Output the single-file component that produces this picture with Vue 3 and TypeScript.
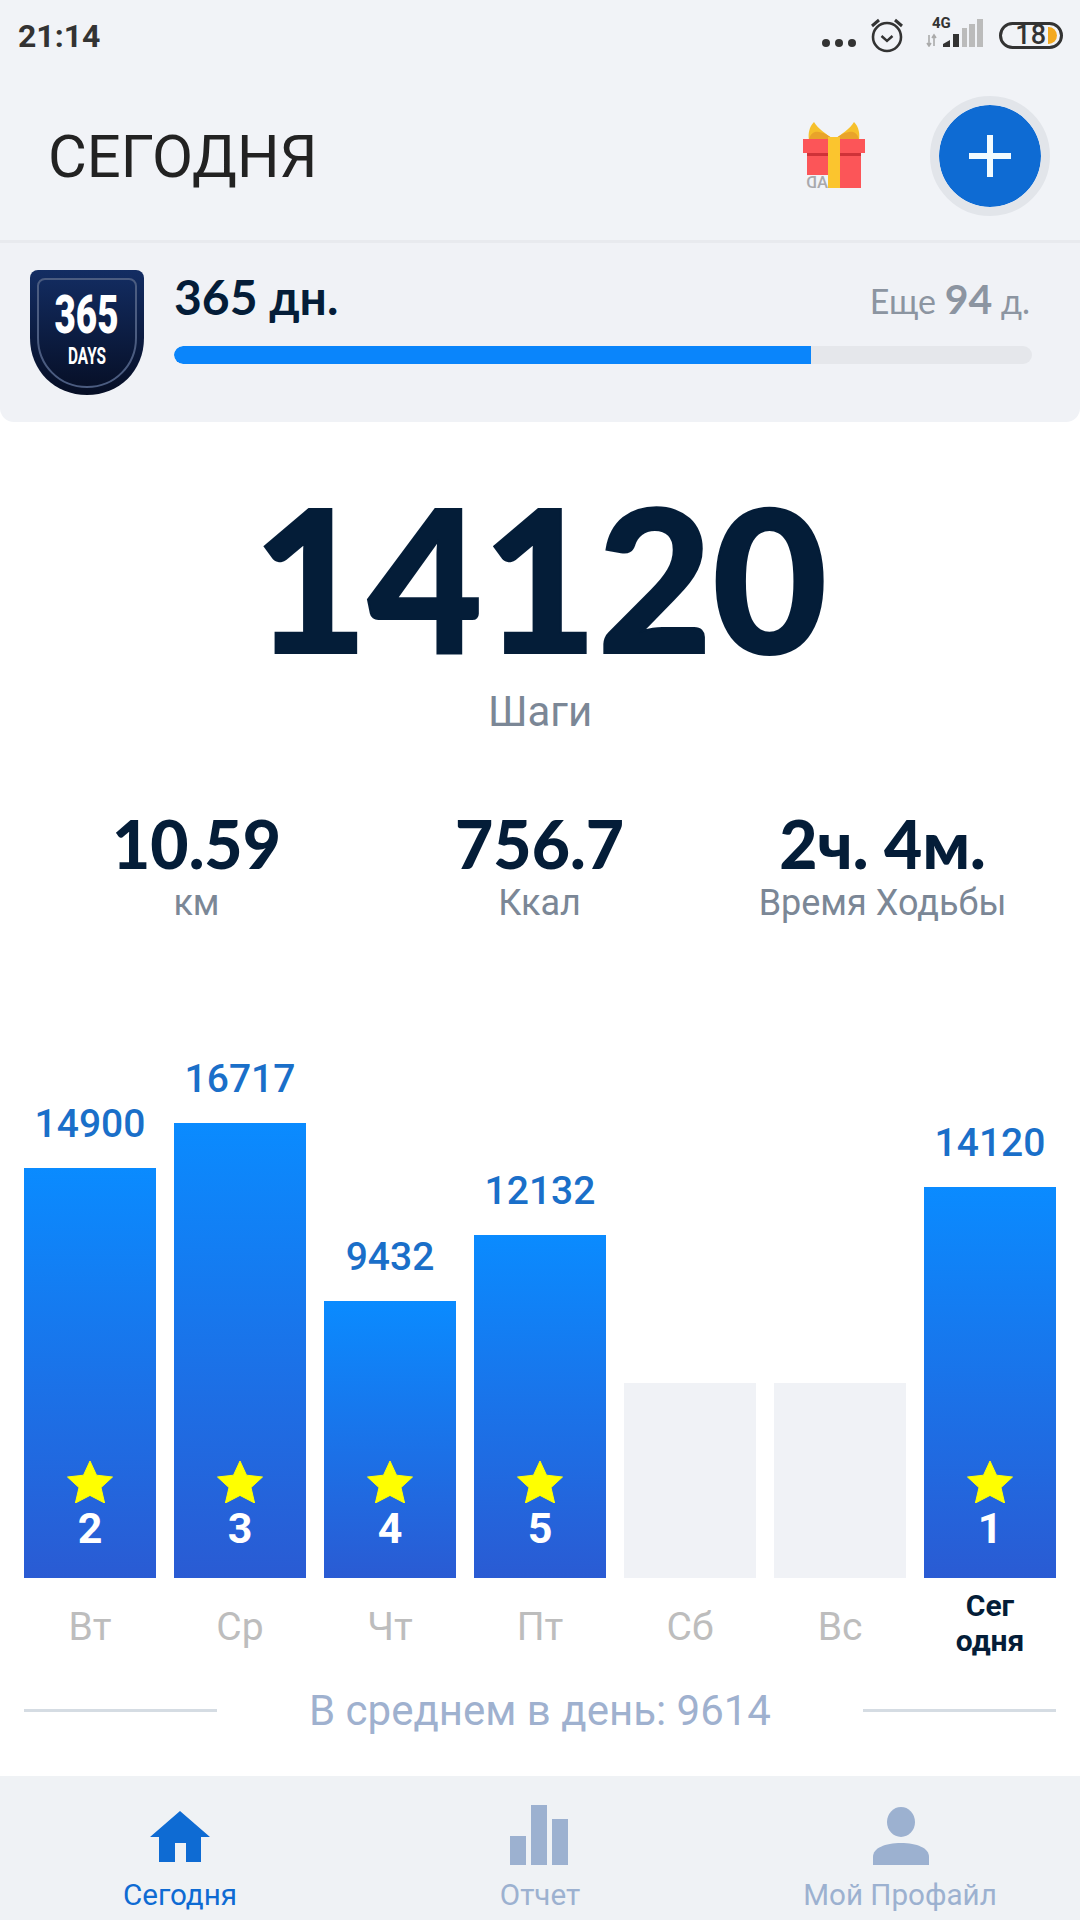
<script setup lang="ts">
interface Day { label: string; value?: number; height: number; rank?: number; today?: boolean }
const days: Day[] = [
  { label: 'Вт', value: 14900, height: 410, rank: 2 },
  { label: 'Ср', value: 16717, height: 455, rank: 3 },
  { label: 'Чт', value: 9432, height: 277, rank: 4 },
  { label: 'Пт', value: 12132, height: 343, rank: 5 },
  { label: 'Сб', height: 195 },
  { label: 'Вс', height: 195 },
  { label: 'Сег одня', value: 14120, height: 391, rank: 1, today: true },
]
const stats = [
  { value: '10.59', label: 'км' },
  { value: '756.7', label: 'Ккал' },
  { value: '2ч. 4м.', label: 'Время Ходьбы' },
]
</script>

<template>
  <div class="app">
    <div class="top">
      <div class="status">
        <span class="time">21:14</span>
        <div class="status-icons">
          <svg class="dots" width="36" height="10" viewBox="0 0 36 10"><circle cx="5" cy="5" r="4" /><circle cx="18" cy="5" r="4" /><circle cx="31" cy="5" r="4" /></svg>
          <svg class="alarm" width="36" height="36" viewBox="0 0 36 36" fill="none" stroke="#333" stroke-width="2.6">
            <circle cx="18" cy="20" r="14" />
            <path d="M12.5 19l5.5 5 5.500-5" stroke-width="2.4" />
            <path d="M3 9l7-6M33 9l-7-6" stroke-width="3" />
          </svg>
          <div class="net">
            <svg width="58" height="30" viewBox="0 0 58 30">
              <text x="7" y="11" class="net-text">4G</text>
              <path d="M4 18v11M2 26l2 3 2-3M9 29V18M7 21l2-3 2 3" stroke="#aaa" stroke-width="1.6" fill="none" />
              <path d="M18 30v-3l7-4v7zM28 30V17h6v13z" fill="#333" />
              <path d="M37 30V11h5v19zM44 30V7h6v23zM52 30V2h6v28z" fill="#bbb" />
            </svg>
          </div>
          <div class="battery">
            <span class="battery-num">18</span>
            <span class="battery-level"></span>
          </div>
        </div>
      </div>
      <header class="header">
        <h1 class="title">СЕГОДНЯ</h1>
        <div class="actions">
          <svg class="gift" width="62" height="66" viewBox="0 0 62 66">
            <path d="M31 18C24 12 15 7 11 0 6 5 5 12 6 18z" fill="#f6c02c" />
            <path d="M31 18C38 12 47 7 51 0c5 5 6 12 5 18z" fill="#f6c02c" />
            <path d="M6 18c1-7 6-9 10-8 6 1 11 4 15 8 4-4 9-7 15-8 4-1 9 1 10 8z" fill="#e9a32a" />
            <rect x="0" y="17" width="62" height="14" fill="#fc5558" />
            <rect x="4" y="31" width="54" height="35" fill="#fc5558" />
            <rect x="4" y="31" width="54" height="3" fill="#cf3238" />
            <rect x="25" y="15" width="12" height="51" fill="#fbc52e" />
            <rect x="3" y="53" width="22" height="13" fill="#f1f3f7" />
            <text transform="translate(25 65.500) scale(-1 1)" class="ad">AD</text>
          </svg>
          <button class="add" type="button" aria-label="Добавить">
            <svg width="42" height="42" viewBox="0 0 42 42"><path d="M21 0v42M0 21h42" stroke="#f2fbff" stroke-width="6" /></svg>
          </button>
        </div>
      </header>
    </div>

    <section class="goal">
      <svg class="shield" width="114" height="125" viewBox="0 0 114 125">
        <defs>
          <linearGradient id="sg" x1="0" y1="0" x2="0" y2="1"><stop offset="0" stop-color="#132d63" /><stop offset="1" stop-color="#060e24" /></linearGradient>
        </defs>
        <path d="M8 0h98a8 8 0 0 1 8 8v60c0 33-25 57-57 57S0 101 0 68V8a8 8 0 0 1 8-8z" fill="url(#sg)" />
        <path d="M15 9h84a7 7 0 0 1 7 7v52c0 27-21 49-49 49S8 95 8 68V16a7 7 0 0 1 7-7z" fill="none" stroke="#4b5c80" stroke-width="2" />
        <text x="56.500" y="63" class="sh-num" text-anchor="middle" textLength="64" lengthAdjust="spacingAndGlyphs">365</text>
        <text x="57" y="94" class="sh-days" text-anchor="middle" textLength="38" lengthAdjust="spacingAndGlyphs">DAYS</text>
      </svg>
      <div class="goal-body">
        <div class="goal-row">
          <span class="goal-name">365 дн.</span>
          <span class="goal-left">Еще <b>94</b> д.</span>
        </div>
        <div class="track"><div class="fill"></div></div>
      </div>
    </section>

    <section class="hero">
      <div class="steps">14120</div>
      <div class="steps-label">Шаги</div>
    </section>

    <section class="stats">
      <div v-for="s in stats" :key="s.label" class="stat">
        <div class="stat-value">{{ s.value }}</div>
        <div class="stat-label">{{ s.label }}</div>
      </div>
    </section>

    <section class="chart">
      <div v-for="d in days" :key="d.label" class="col">
        <div class="plot">
          <div v-if="d.value" class="bar-value">{{ d.value }}</div>
          <div class="bar" :class="{ empty: !d.value }" :style="{ height: d.height + 'px' }">
            <template v-if="d.rank">
              <svg class="star" width="46" height="42" viewBox="0 0 46 42"><path d="M23 0l6.500 14.200L45.500 16 34 26.600 37.600 42 23 34.400 8.400 42 12 26.600 .5 16l16-1.800z" fill="#ffff00" stroke="#ffff00" stroke-linejoin="round" /></svg>
              <span class="rank">{{ d.rank }}</span>
            </template>
          </div>
        </div>
        <div class="day" :class="{ today: d.today }">{{ d.label }}</div>
      </div>
    </section>

    <section class="average">
      <span class="rule"></span>
      <span class="avg-text">В среднем в день: 9614</span>
      <span class="rule"></span>
    </section>

    <nav class="nav">
      <div class="tab active">
        <svg width="60" height="60" viewBox="0 0 60 60"><path d="M30 6L60 32H51V57H36V38H25V57H9V32H0z" fill="#0e6bd3" /></svg>
        <span>Сегодня</span>
      </div>
      <div class="tab">
        <svg width="60" height="60" viewBox="0 0 60 60"><path d="M0 31h16v29H0zM21 0h16v60H21zM42 14h16v46H42z" fill="#9cb1d0" /></svg>
        <span>Отчет</span>
      </div>
      <div class="tab">
        <svg width="60" height="60" viewBox="0 0 60 60"><ellipse cx="31" cy="17" rx="14" ry="15" fill="#9cb1d0" /><path d="M3 60V52C3 43 15 38 31 38S59 43 59 52v8z" fill="#9cb1d0" /></svg>
        <span>Мой Профайл</span>
      </div>
    </nav>
  </div>
</template>

<style>
html, body { margin: 0; background: #fff; }
</style>

<style scoped>
.app { width: 1080px; height: 1920px; overflow: hidden; display: flex; flex-direction: column; background: #fff; font-family: Roboto, "Noto Sans", sans-serif; }
.top { background: #f1f3f7; border-bottom: 3px solid #e8eaee; }
.status { height: 72px; display: flex; align-items: center; justify-content: space-between; padding: 0 17px 0 18px; }
.time { font-size: 32px; font-weight: 700; color: #333; }
.status-icons { display: flex; align-items: center; }
.dots { fill: #333; margin-top: 14px; margin-right: 12px; }
.alarm { margin-top: -2px; margin-right: 20px; }
.net { margin-right: 16px; margin-top: -4px; }
.net-text { font: 700 15px Roboto, sans-serif; fill: #333; }
.battery { width: 64px; height: 27px; box-sizing: border-box; border: 3px solid #333; border-radius: 14px; display: flex; align-items: center; justify-content: flex-end; padding-right: 3px; margin-top: -2px; }
.battery-num { font-size: 27px; font-weight: 500; color: #333; line-height: 1; margin-right: 2px; }
.battery-level { width: 9px; height: 17px; background: #f3a91f; border-radius: 0 9px 9px 0; }
.header { height: 168px; display: flex; align-items: center; justify-content: space-between; padding: 0 30px 0 48px; box-sizing: border-box; }
.title { margin: 0; font-size: 59.7px; font-weight: 400; color: #222; line-height: 1; margin-top: 4px; }
.actions { display: flex; align-items: center; gap: 65px; }
.gift { margin-top: -2px; }
.ad { font: 500 16.5px Roboto, sans-serif; fill: #a9a9ad; }
.add { width: 120px; height: 120px; box-sizing: border-box; padding: 0; border: 9px solid #e2e5ea; border-radius: 50%; background: #0e6bd3; background-clip: padding-box; display: flex; align-items: center; justify-content: center; margin-top: -1px; }
.goal { height: 179px; box-sizing: border-box; background: #f0f2f6; border-radius: 0 0 14px 14px; display: flex; padding: 27px 48px 0 30px; gap: 30px; }
.shield { flex: none; }
.sh-num { font: 900 54px Roboto, sans-serif; fill: #fff; }
.sh-days { font: 700 24px Roboto, sans-serif; fill: #fff; }
.goal-body { flex: 1; }
.goal-row { display: flex; justify-content: space-between; height: 48px; }
.goal-name { font: 700 48px Lato, "Noto Sans", sans-serif; color: #041d38; line-height: 54px; }
.goal-left { font: 400 34px Lato, "Noto Sans", sans-serif; color: #8c95a1; line-height: 58px; margin-right: 2px; }
.goal-left b { font-size: 41px; font-weight: 700; }
.track { margin-top: 28px; height: 18px; background: #e5e7eb; border-radius: 9px; overflow: hidden; }
.fill { width: 637px; height: 100%; background: #0a85fb; border-radius: 9px 0 0 9px; }
.hero { height: 349px; box-sizing: border-box; text-align: center; padding-top: 55px; }
.steps { font: 900 198px/200px Lato, sans-serif; color: #041d38; -webkit-text-stroke: 2px #041d38; }
.steps-label { font-size: 42px; color: #7b8796; line-height: 44px; margin-top: 13px; }
.stats { display: grid; grid-template-columns: repeat(3, 343px); padding: 40px 25px 0; height: 294px; box-sizing: border-box; }
.stat { text-align: center; }
.stat-value { font: 900 66px/66px Lato, "Noto Sans", sans-serif; color: #041d38; }
.stat-label { font-size: 36px; line-height: 44px; color: #7b8796; margin-top: 4px; }
.chart { display: grid; grid-template-columns: repeat(7, 132px); gap: 18px; padding: 0 24px; margin-top: -20px; }
.col { display: flex; flex-direction: column; align-items: center; }
.plot { height: 533px; width: 100%; display: flex; flex-direction: column; justify-content: flex-end; align-items: center; }
.bar-value { font-size: 39px; font-weight: 500; color: #1a6fc9; line-height: 46px; margin-bottom: 21px; }
.bar { width: 100%; background: linear-gradient(180deg, #0a8bff, #2a5bd3); display: flex; flex-direction: column; align-items: center; justify-content: flex-end; padding-bottom: 30px; box-sizing: border-box; }
.bar.empty { background: #f0f2f6; }
.star { margin-bottom: 5px; }
.rank { font-size: 43px; font-weight: 700; color: #fff; line-height: 40px; }
.day { height: 100px; width: 100%; display: flex; align-items: center; justify-content: center; text-align: center; font-size: 39px; color: #bdbdbd; box-sizing: border-box; padding-bottom: 3px; }
.day.today { font-size: 30px; font-weight: 700; color: #041d38; line-height: 35px; padding: 0 20px 11px; }
.average { display: flex; align-items: center; justify-content: space-between; padding: 0 24px; margin-top: 10px; height: 44px; }
.rule { width: 193px; height: 3px; background: #d5dce3; }
.avg-text { font-size: 42px; color: #9fb1cf; }
.nav { margin-top: auto; height: 144px; background: #eff2f5; display: grid; grid-template-columns: repeat(3, 360px); }
.tab { display: flex; flex-direction: column; align-items: center; padding-top: 29px; box-sizing: border-box; font-size: 29.6px; color: #9cb1d0; }
.tab svg { display: block; }
.tab span { margin-top: 12px; line-height: 36px; }
.tab.active { color: #0e6bd3; }
</style>
